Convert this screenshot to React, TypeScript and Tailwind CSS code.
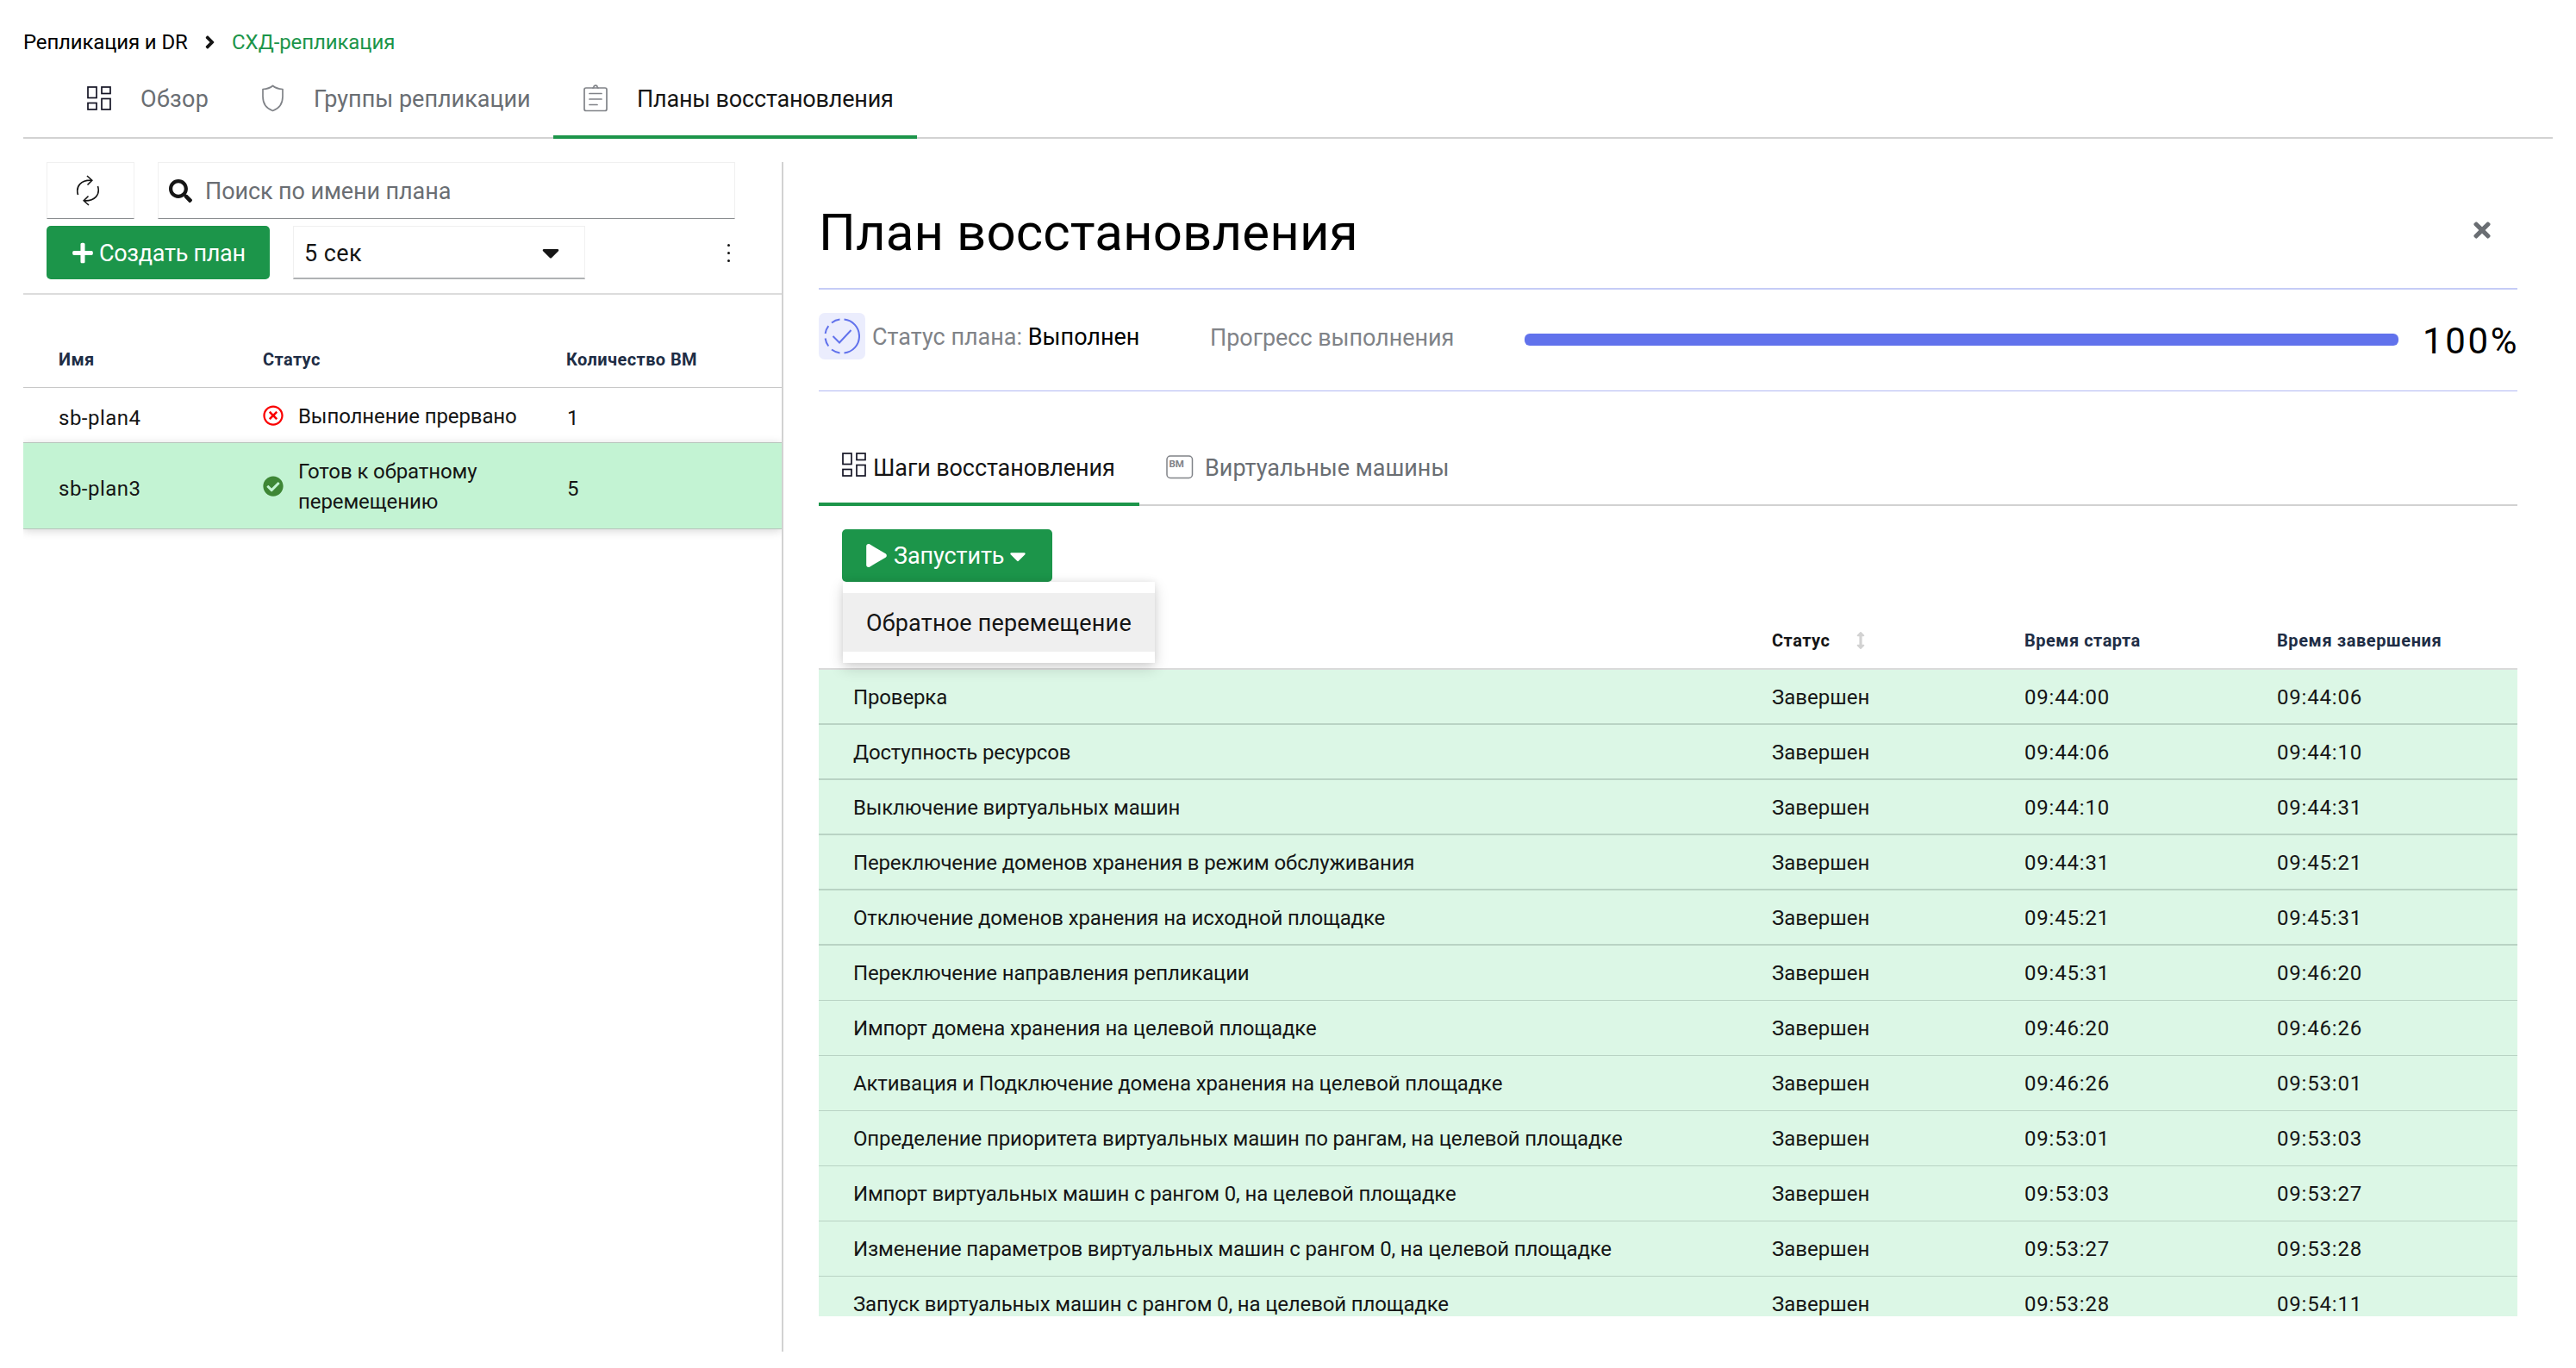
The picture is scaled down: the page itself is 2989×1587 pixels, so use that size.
import React, { useState } from 'react';
import {
  FaAngleRight,
  FaArrowsAltV,
  FaCaretDown,
  FaCheckCircle,
  FaPlay,
  FaPlus,
  FaRegTimesCircle,
  FaSearch,
  FaTimes,
} from 'react-icons/fa';

const plans = [
  {
    name: 'sb-plan4',
    status: 'Выполнение прервано',
    count: 1,
    failed: true,
  },
  {
    name: 'sb-plan3',
    status: 'Готов к обратному перемещению',
    count: 5,
    failed: false,
  },
];

const steps = [
  ['Проверка', '09:44:00', '09:44:06'],
  ['Доступность ресурсов', '09:44:06', '09:44:10'],
  ['Выключение виртуальных машин', '09:44:10', '09:44:31'],
  [
    'Переключение доменов хранения в режим обслуживания',
    '09:44:31',
    '09:45:21',
  ],
  [
    'Отключение доменов хранения на исходной площадке',
    '09:45:21',
    '09:45:31',
  ],
  ['Переключение направления репликации', '09:45:31', '09:46:20'],
  ['Импорт домена хранения на целевой площадке', '09:46:20', '09:46:26'],
  [
    'Активация и Подключение домена хранения на целевой площадке',
    '09:46:26',
    '09:53:01',
  ],
  [
    'Определение приоритета виртуальных машин по рангам, на целевой площадке',
    '09:53:01',
    '09:53:03',
  ],
  [
    'Импорт виртуальных машин с рангом 0, на целевой площадке',
    '09:53:03',
    '09:53:27',
  ],
  [
    'Изменение параметров виртуальных машин с рангом 0, на целевой площадке',
    '09:53:27',
    '09:53:28',
  ],
  [
    'Запуск виртуальных машин с рангом 0, на целевой площадке',
    '09:53:28',
    '09:54:11',
  ],
];

const App = () => {
  return (
    <div className="flex h-[1587px] w-[2989px] flex-col overflow-hidden bg-white font-['Roboto','Noto_Sans',sans-serif] text-[27px] text-[#151515]">
      <div className="flex h-[98px] shrink-0 items-center pl-[27px] text-[24px]">
        <span className="w-[209px] whitespace-nowrap tracking-[-0.15px] text-black">
          Репликация и DR
        </span>
        <FaAngleRight className="w-[15px] text-[24px]" />
        <span className="ml-[18px] whitespace-nowrap tracking-[-0.1px] text-[#1c954a]">
          СХД-репликация
        </span>
      </div>
      <nav className="mx-[27px] flex h-[63px] shrink-0 border-b-2 border-[#d2d2d2] leading-[35px] text-[#6a6e73]">
        <div className="flex w-[242px] items-start pl-[74px]">
          <span className="w-[62px] pt-[2px]">
            <GridIcon />
          </span>
          <span className="tracking-[0.3px]">Обзор</span>
        </div>
        <div className="flex w-[373px] items-start pl-[33px]">
          <span className="w-[62px]">
            <ShieldIcon />
          </span>
          <span className="whitespace-nowrap">Группы репликации</span>
        </div>
        <div className="flex h-[63px] w-[422px] items-start border-b-4 border-[#1c954a] pl-[35px]">
          <span className="w-[62px]">
            <ClipboardIcon />
          </span>
          <span className="whitespace-nowrap tracking-[-0.2px] text-[#151515]">
            Планы восстановления
          </span>
        </div>
      </nav>
      <div className="flex min-h-0 flex-1">
        <PlanList />
        <PlanDetails />
      </div>
    </div>
  );
};
export default App;

const PlanList = () => {
  return (
    <div className="ml-[27px] mt-[27px] h-[1380px] w-[882px] shrink-0 border-r-2 border-[#d2d2d2]">
      <div className="flex h-[154px] flex-col gap-2 border-b-2 border-[#dcdcdc] pl-[27px]">
        <div className="flex h-[66px] gap-[27px]">
          <button
            aria-label="refresh"
            className="flex w-[102px] items-center border border-b-[#8a8d90] border-l-[#f0f0f0] border-r-[#f0f0f0] border-t-[#f0f0f0] pl-[33px]"
          >
            <RefreshIcon />
          </button>
          <div className="flex w-[670px] items-center gap-[15px] border border-b-[#8a8d90] border-l-[#f0f0f0] border-r-[#f0f0f0] border-t-[#f0f0f0] pl-[12px] text-[#6a6e73]">
            <FaSearch className="text-[#151515]" />
            <span className="pt-[2px] tracking-[-0.1px]">
              Поиск по имени плана
            </span>
          </div>
        </div>
        <div className="flex h-[62px] items-center">
          <button className="flex h-full w-[259px] items-center gap-[7px] whitespace-nowrap rounded-[5px] bg-[#1c954a] pl-[30px] tracking-[-0.3px] text-white">
            <FaPlus className="w-[24px]" />
            <span className="pt-[2px]">Создать план</span>
          </button>
          <div className="ml-[27px] flex h-full w-[339px] items-center justify-between border border-b-2 border-b-[#b0b2b4] border-l-[#f0f0f0] border-r-[#f0f0f0] border-t-[#f0f0f0] pl-[12px] pr-[23px]">
            <span className="pt-[3px] tracking-[0.4px]">5 сек</span>
            <FaCaretDown className="text-[32px]" />
          </div>
          <div className="ml-[165px] flex flex-col gap-[6px]">
            <span className="h-[3px] w-[3px] rounded-full bg-[#151515]" />
            <span className="h-[3px] w-[3px] rounded-full bg-[#151515]" />
            <span className="h-[3px] w-[3px] rounded-full bg-[#151515]" />
          </div>
        </div>
      </div>
      <div className="flex h-[108px] border-b border-[#c8c8c8] pl-[41px] pt-[63px] text-[20px] font-bold leading-[24px] tracking-[0.4px] text-[#202d45]">
        <span className="w-[237px]">Имя</span>
        <span className="w-[352px]">Статус</span>
        <span>Количество ВМ</span>
      </div>
      {plans.map((plan) => (
        <div
          key={plan.name}
          className={
            plan.failed
              ? 'flex h-[63px] items-center pl-[41px] text-[24px]'
              : 'flex h-[101px] items-center border-y border-[#b9c4bd] bg-[#c3f3d3] pl-[41px] text-[24px] shadow-[0_2px_10px_rgba(0,0,0,0.16)] [clip-path:inset(-20px_0)]'
          }
        >
          <span className="w-[237px] pt-[7px] tracking-[0.5px]">
            {plan.name}
          </span>
          <div className="flex w-[352px] items-center">
            {plan.failed ? (
              <FaRegTimesCircle className="mr-[17px] text-[#fa0000]" />
            ) : (
              <FaCheckCircle className="mr-[17px] text-[#3e8635]" />
            )}
            <span className="w-[262px] pt-[3px] leading-[35px] tracking-[-0.1px]">
              {plan.status}
            </span>
          </div>
          <span className="pl-px pt-[7px]">{plan.count}</span>
        </div>
      ))}
    </div>
  );
};

const PlanDetails = () => {
  const [menuOpen, setMenuOpen] = useState(true);

  return (
    <div className="flex w-[2012px] flex-col pl-[41px]">
      <div className="flex h-[175px] shrink-0 items-center justify-between border-b-2 border-[#c5ccf7] pr-[27px] pt-[44px]">
        <h1 className="text-[60px] leading-[70px] tracking-[0.1px] text-black">
          План восстановления
        </h1>
        <button aria-label="close" className="-mt-[5px]">
          <FaTimes className="text-[28px] text-[#6a6e73]" />
        </button>
      </div>
      <div className="flex h-[118px] shrink-0 items-start border-b border-[#b1b9f3] pt-[27px] text-[#808388]">
        <div className="flex h-[54px] w-[454px] items-center">
          <span className="mr-[8px] flex h-[54px] w-[54px] items-center justify-center rounded-[7px] bg-[#ebedfd]">
            <StatusIcon />
          </span>
          <span className="whitespace-nowrap pt-[3px]">
            Статус плана:{' '}
            <span className="text-black">Выполнен</span>
          </span>
        </div>
        <div className="flex h-[54px] w-[365px] items-center pt-[4px] tracking-[-0.05px]">
          Прогресс выполнения
        </div>
        <div className="mt-[24px] h-[14px] w-[1014px] rounded-[6px] bg-[#6172ec]" />
        <span className="-mr-[2px] ml-auto pt-[9px] text-[42px] leading-[48px] tracking-[2.6px] text-black">
          100%
        </span>
      </div>
      <div className="flex h-[133px] shrink-0 border-b-2 border-[#d2d2d2]">
        <div className="flex h-[133px] w-[372px] items-center border-b-4 border-[#1c954a] pl-[27px] pt-[48px]">
          <span className="-mt-[8px] mr-[7px]">
            <GridIcon />
          </span>
          <span className="whitespace-nowrap pt-[2px] tracking-[-0.1px]">
            Шаги восстановления
          </span>
        </div>
        <div className="flex h-[133px] items-center pb-[4px] pl-[31px] pt-[48px] text-[#6a6e73]">
          <span className="-mt-[2px] mr-[13px]">
            <VmIcon />
          </span>
          <span className="pt-[2px]">Виртуальные машины</span>
        </div>
      </div>
      <div className="relative z-10 ml-[27px] mt-[27px] h-[61px] w-[244px] shrink-0">
        <button
          className="flex h-full w-full items-center whitespace-nowrap rounded-[5px] bg-[#1c954a] pl-[28px] text-white"
          onClick={() => setMenuOpen(!menuOpen)}
        >
          <FaPlay className="mr-[8px] w-[24px]" />
          <span className="w-[129px] pt-[2px] text-left tracking-[-0.1px]">
            Запустить
          </span>
          <FaCaretDown className="text-[30px]" />
        </button>
        {menuOpen && (
          <div className="absolute left-[1px] top-[61px] w-[362px] bg-white py-[13px] shadow-[0_6px_16px_rgba(0,0,0,0.16),0_0_8px_rgba(0,0,0,0.08)]">
            <div className="flex h-[68px] items-center whitespace-nowrap bg-[#efefef] pl-[27px] pt-[2px] tracking-[0.2px]">
              Обратное перемещение
            </div>
          </div>
        )}
      </div>
      <div className="flex h-[102px] shrink-0 items-start border-b-2 border-[#dadada] pl-[1106px] pt-[56px] text-[20px] font-bold leading-[24px] text-[#202d45]">
        <span className="flex w-[293px] items-center gap-[26px] tracking-[0.5px] text-[#151515]">
          Статус
          <FaArrowsAltV className="text-[20px] text-[#d2d2d2]" />
        </span>
        <span className="w-[293px] tracking-[0.5px]">Время старта</span>
        <span className="tracking-[0.6px]">Время завершения</span>
      </div>
      <div className="h-[750px] shrink-0 overflow-hidden">
        {steps.map(([name, start, end], index) => (
          <div
            key={name}
            className={
              index < 5
                ? 'flex h-[64px] items-center border-b-2 border-[#b9d3c4] bg-[#dcf7e6] pl-[40px] pt-[2px] text-[24px]'
                : 'flex h-[64px] items-center border-b border-[#b9d3c4] bg-[#dcf7e6] pl-[40px] pt-px text-[24px]'
            }
          >
            <span className="w-[1066px] tracking-[-0.15px]">{name}</span>
            <span className="w-[293px]">Завершен</span>
            <span className="w-[293px] tracking-[0.8px]">{start}</span>
            <span className="tracking-[0.8px]">{end}</span>
          </div>
        ))}
      </div>
    </div>
  );
};

const GridIcon = () => (
  <svg
    width="29"
    height="28"
    viewBox="0 0 29 28"
    fill="none"
    stroke="#151525"
    strokeWidth="1.7"
  >
    <rect x="1" y="1" width="10" height="12.5" />
    <rect x="17" y="1" width="10" height="7.5" />
    <rect x="1" y="19.5" width="10" height="7.5" />
    <rect x="17" y="14.5" width="10" height="12.5" />
  </svg>
);

const ShieldIcon = () => (
  <svg
    width="30"
    height="33"
    viewBox="0 0 30 33"
    fill="none"
    stroke="#808388"
    strokeWidth="1.7"
    strokeLinejoin="round"
  >
    <path d="M14.5 1.5C11.5 4 7.5 5.2 3 5.5V14C3 22 7.5 28 14.5 30.5C21.5 28 26 22 26 14V5.5C21.5 5.2 17.5 4 14.5 1.5Z" />
  </svg>
);

const ClipboardIcon = () => (
  <svg
    width="29"
    height="32"
    viewBox="0 0 29 32"
    fill="none"
    stroke="#808388"
    strokeWidth="1.7"
    strokeLinecap="round"
  >
    <rect x="1" y="4" width="26" height="26.5" rx="2" />
    <path d="M11 4C11.5 4 12 3.5 12 2.8C12 0.6 16 0.6 16 2.8C16 3.5 16.5 4 17 4" />
    <path d="M7 10.5H21M7 17H21M7 23.5H16" />
  </svg>
);

const RefreshIcon = () => (
  <svg
    width="28"
    height="36"
    viewBox="0 0 28 36"
    fill="none"
    stroke="#151515"
    strokeWidth="1.6"
  >
    <path d="M2.5 23C-0.5 13 6 5.5 18.5 6.2M13 1L18.8 6.2L13.5 11.5" />
    <path d="M25.5 13C28.5 23 22 30.5 9.5 29.8M15 35L9.2 29.8L14.5 24.5" />
  </svg>
);

const StatusIcon = () => (
  <svg
    width="42"
    height="42"
    viewBox="0 0 42 42"
    fill="none"
    stroke="#6172ec"
    strokeWidth="2"
  >
    <path d="M23.5 1.6A19.5 19.5 0 0 1 23.5 40.4" />
    <path d="M18.5 1.6A19.5 19.5 0 0 0 9 5.5" />
    <path d="M5.3 9.2A19.5 19.5 0 0 0 1.6 18" />
    <path d="M1.6 23.5A19.5 19.5 0 0 0 5.3 32.5" />
    <path d="M9 36.5A19.5 19.5 0 0 0 18.5 40.4" />
    <path d="M10.5 21L18 28.5L31.5 14" />
  </svg>
);

const VmIcon = () => (
  <svg width="32" height="28" viewBox="0 0 32 28" fill="none">
    <rect
      x="1"
      y="1"
      width="29.5"
      height="25.5"
      rx="4"
      stroke="#808388"
      strokeWidth="1.5"
    />
    <text
      x="3.5"
      y="14"
      fill="#808388"
      fontFamily="Roboto, sans-serif"
      fontSize="11.5"
      fontWeight="700"
    >
      ВМ
    </text>
  </svg>
);
